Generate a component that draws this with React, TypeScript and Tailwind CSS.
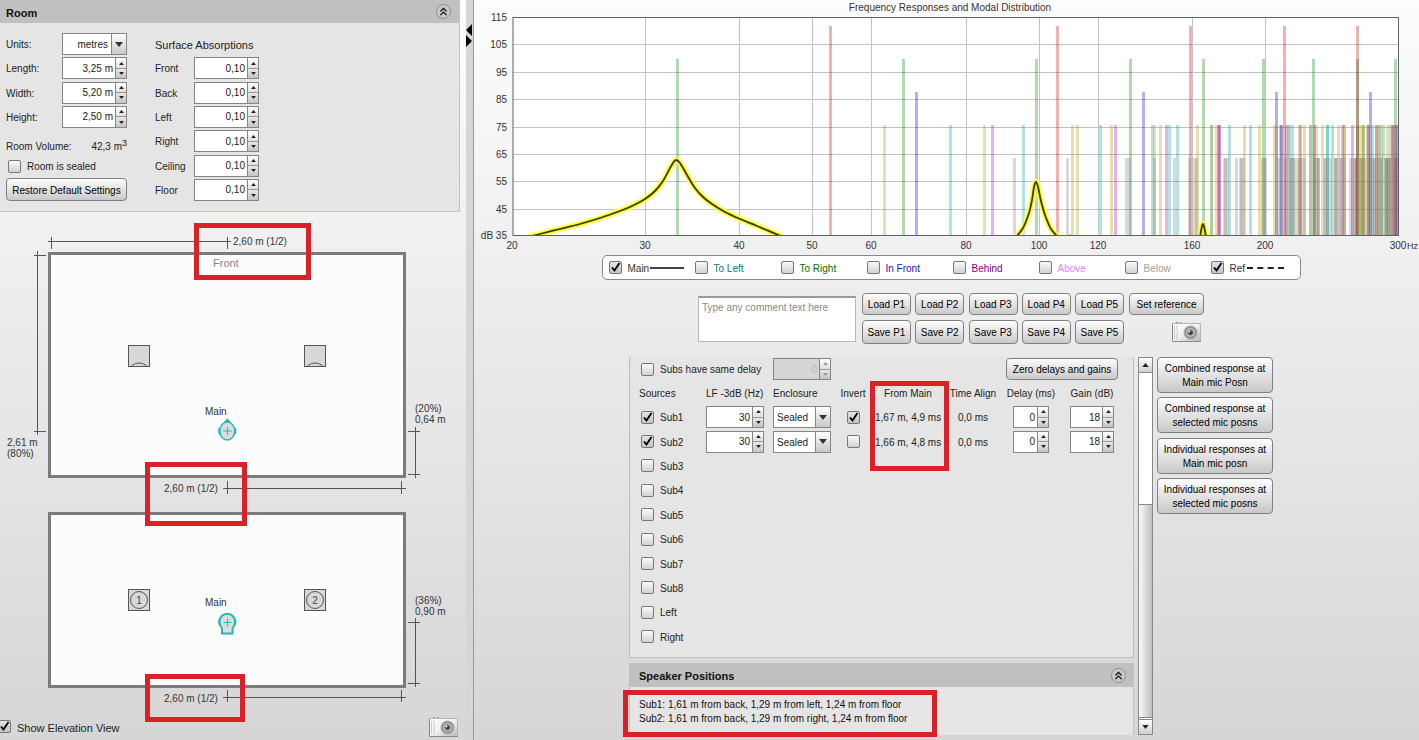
import { useState } from 'react';
import type { ReactNode } from 'react';
import { ChevronsUp } from 'lucide-react';

const SPEED_OF_SOUND = 344;
const ROOM = { length: 3.25, width: 5.2, height: 2.5 };

const PLOT = { left: 513, right: 1399, top: 17, bottom: 236 };
const F_MIN = 20;
const F_MAX = 300;

const freqToX = (f: number) =>
  PLOT.left + (Math.log(f / F_MIN) / Math.log(F_MAX / F_MIN)) * (PLOT.right - PLOT.left);
const dbToY = (db: number) => PLOT.bottom - ((db - 35) / 80) * (PLOT.bottom - PLOT.top);

interface Mode {
  freq: number;
  level: number;
  color: string;
}

// All axial, tangential and oblique modes that fall inside the plotted range
function roomModes(): Mode[] {
  const modes: Mode[] = [];
  for (let l = 0; l < 8; l++) {
    for (let w = 0; w < 12; w++) {
      for (let h = 0; h < 6; h++) {
        const freq =
          (SPEED_OF_SOUND / 2) * Math.hypot(l / ROOM.length, w / ROOM.width, h / ROOM.height);
        if (freq < F_MIN || freq > F_MAX) continue;
        if (l && w && h) modes.push({ freq, level: 63.5, color: '#808080' });
        else if (l && w) modes.push({ freq, level: 75.5, color: '#b49100' });
        else if (w && h) modes.push({ freq, level: 75.5, color: '#00a8a0' });
        else if (l && h) modes.push({ freq, level: 75.5, color: '#b000b0' });
        else if (l) modes.push({ freq, level: 111.7, color: '#c80000' });
        else if (w) modes.push({ freq, level: 99.7, color: '#008000' });
        else modes.push({ freq, level: 87.7, color: '#0000b8' });
      }
    }
  }
  return modes;
}

const MODES = roomModes();

type Point = [number, number];

const MAIN_PEAKS: Point[][] = [
  [
    [529, 237], [540, 234], [560, 229], [580, 224], [600, 218], [620, 211], [632, 206], [645, 199],
    [655, 191], [663, 181], [669, 170], [673, 163], [676, 160], [680, 163], [687, 175], [695, 188],
    [703, 197], [712, 204], [725, 212], [740, 219], [757, 226], [783, 237],
  ],
  [
    [1016, 237], [1023, 228], [1029, 213], [1032, 200], [1034, 187], [1036, 182], [1038, 187],
    [1041, 201], [1045, 215], [1051, 229], [1058, 237],
  ],
  [
    [1200, 237], [1202, 226], [1203, 224], [1204, 226], [1206, 237],
  ],
];

function smoothPath(points: Point[]) {
  let d = `M${points[0][0]} ${points[0][1]}`;
  for (let i = 0; i < points.length - 1; i++) {
    const p0 = points[Math.max(i - 1, 0)];
    const p1 = points[i];
    const p2 = points[i + 1];
    const p3 = points[Math.min(i + 2, points.length - 1)];
    d += ` C${p1[0] + (p2[0] - p0[0]) / 6} ${p1[1] + (p2[1] - p0[1]) / 6} ${p2[0] - (p3[0] - p1[0]) / 6} ${p2[1] - (p3[1] - p1[1]) / 6} ${p2[0]} ${p2[1]}`;
  }
  return d;
}

function Checkbox({ label, checked = false, labelClass = 'text-[#222]', hideLabel = false, children }: {
  label: string;
  checked?: boolean;
  labelClass?: string;
  hideLabel?: boolean;
  children?: ReactNode;
}) {
  const [on, setOn] = useState(checked);
  return (
    <label className="inline-flex items-center whitespace-nowrap">
      <span className="relative block h-[13px] w-[13px]">
        <input
          type="checkbox"
          checked={on}
          onChange={(e) => setOn(e.target.checked)}
          aria-label={hideLabel ? label : undefined}
          className="peer block h-[13px] w-[13px] appearance-none rounded-[2px] border border-[#777] bg-linear-to-b from-[#fafafa] to-[#d2d2d2] checked:from-[#e4e4e4] checked:to-[#c4c4c4]"
        />
        <svg viewBox="0 0 13 13" className="pointer-events-none absolute inset-0 hidden peer-checked:block">
          <path d="M3 6.5 5.5 9.5 10.5 2" fill="none" stroke="#000" strokeWidth="1.9" />
        </svg>
      </span>
      {!hideLabel && <span className={`ml-[6px] pt-[2px] ${labelClass}`}>{label}</span>}
      {children}
    </label>
  );
}

function Triangle({ up = false, className }: { up?: boolean; className: string }) {
  return (
    <svg viewBox="0 0 8 5" className={className}>
      <path d={up ? 'M0 5 4 0 8 5z' : 'M0 0h8L4 5z'} fill="currentColor" />
    </svg>
  );
}

function Spinner({ label, value, width, disabled = false }: {
  label: string;
  value: string;
  width: string;
  disabled?: boolean;
}) {
  const tone = disabled ? 'text-[#999]' : 'text-[#222]';
  return (
    <div className={`flex h-[22px] border border-[#858585] ${width} ${disabled ? 'bg-[#d6d6d6]' : 'bg-white'}`}>
      <input
        type="text"
        aria-label={label}
        defaultValue={value}
        disabled={disabled}
        className={`min-w-0 flex-1 bg-transparent pt-px pr-[2px] text-right text-[10px] outline-none ${disabled ? 'text-[#b5b5b5]' : ''}`}
      />
      <div className={`flex w-[11px] flex-col border-l border-[#858585] ${tone}`}>
        <button
          type="button"
          aria-label={`Increase ${label}`}
          disabled={disabled}
          className="flex flex-1 items-center justify-center border-b border-[#999] bg-linear-to-b from-white to-[#e0e0e0]"
        >
          <Triangle up className="h-[3px] w-[5px]" />
        </button>
        <button
          type="button"
          aria-label={`Decrease ${label}`}
          disabled={disabled}
          className="flex flex-1 items-center justify-center bg-linear-to-b from-[#e8e8e8] to-[#c4c4c4]"
        >
          <Triangle className="h-[3px] w-[5px]" />
        </button>
      </div>
    </div>
  );
}

function Dropdown({ label, options, width, align = '' }: {
  label: string;
  options: string[];
  width: string;
  align?: string;
}) {
  return (
    <div className={`relative h-[22px] ${width}`}>
      <select
        aria-label={label}
        className={`h-full w-full appearance-none border border-[#858585] bg-white pt-[2px] pr-[18px] pl-[3px] text-[10px] outline-none ${align}`}
      >
        {options.map((o) => (
          <option key={o}>{o}</option>
        ))}
      </select>
      <span className="pointer-events-none absolute inset-y-px right-px flex w-[15px] items-center justify-center border-l border-[#858585] bg-linear-to-b from-white to-[#c8c8c8] text-[#333]">
        <Triangle className="h-[5px] w-[8px]" />
      </span>
    </div>
  );
}

function Button({ className = '', children }: { className?: string; children: ReactNode }) {
  return (
    <button
      type="button"
      className={`flex items-center justify-center rounded-[4px] border border-[#808080] bg-linear-to-b from-[#fdfdfd] to-[#c9c9c9] pt-[2px] text-center text-[10px] leading-[14px] whitespace-nowrap text-black hover:to-[#d8d8d8] ${className}`}
    >
      {children}
    </button>
  );
}

function CameraButton({ label }: { label: string }) {
  return (
    <button type="button" aria-label={label} className="block h-[21px] w-[29px]">
      <svg viewBox="0 0 29 21" className="h-full w-full">
        <defs>
          <linearGradient id="cameraBody" x1="0" y1="0" x2="1" y2="1">
            <stop offset="0" stopColor="#fff" />
            <stop offset="0.5" stopColor="#f0f0f0" />
            <stop offset="1" stopColor="#b8b8b8" />
          </linearGradient>
          <radialGradient id="cameraLens">
            <stop offset="0" stopColor="#222" />
            <stop offset="0.3" stopColor="#555" />
            <stop offset="0.55" stopColor="#c8c8c8" />
            <stop offset="0.8" stopColor="#8c8c8c" />
            <stop offset="1" stopColor="#b8b8b8" />
          </radialGradient>
        </defs>
        <path d="M4 1.5h2M8 1.5h1.5" stroke="#999" />
        <rect x="0.5" y="2.5" width="28" height="18" fill="url(#cameraBody)" stroke="#b4b4b4" />
        <path d="M0.5 20V3M1 20.5h28" stroke="#8a8a8a" />
        <path d="M4.5 4q2 7 0 15M2.5 5v13" fill="none" stroke="#ccc" />
        <circle cx="18.5" cy="11.5" r="6.5" fill="url(#cameraLens)" stroke="#a0a0a0" />
        <circle cx="17.5" cy="10.5" r="1" fill="#fff" />
      </svg>
    </button>
  );
}

function CollapseHeader({ title, className = '' }: { title: string; className?: string }) {
  return (
    <div className={`flex items-center justify-between bg-[#c0c0c0] ${className}`}>
      <h2 className="pt-[2px] text-[11px] font-bold text-[#111]">{title}</h2>
      <button
        type="button"
        aria-label={`Collapse ${title}`}
        className="flex h-[15px] w-[15px] items-center justify-center rounded-full border border-[#8c8c8c] bg-[#cacaca]"
      >
        <ChevronsUp className="h-[13px] w-[13px] text-[#222]" strokeWidth={2.5} />
      </button>
    </div>
  );
}

const DIMENSIONS = [
  { label: 'Length:', value: '3,25 m' },
  { label: 'Width:', value: '5,20 m' },
  { label: 'Height:', value: '2,50 m' },
];

const SURFACES = ['Front', 'Back', 'Left', 'Right', 'Ceiling', 'Floor'];

function RoomPanel() {
  return (
    <section className="mr-[6px] border-r border-b border-[#c4c4c4] bg-[#e5e5e5]">
      <CollapseHeader title="Room" className="h-[23px] pr-[8px] pl-[6px]" />
      <div className="flex gap-[28px] px-[6px] pt-[10px] pb-[10px]">
        <div className="flex h-[168px] w-[121px] flex-col">
          <div className="flex h-[95px] flex-col justify-between">
            <div className="flex items-center justify-between">
              <span className="pt-[2px]">Units:</span>
              <Dropdown label="Units" options={['metres', 'feet']} width="w-[65px]" align="text-right" />
            </div>
            {DIMENSIONS.map((d) => (
              <div key={d.label} className="flex items-center justify-between">
                <span className="pt-[2px]">{d.label}</span>
                <Spinner label={d.label} value={d.value} width="w-[65px]" />
              </div>
            ))}
          </div>
          <div className="mt-[10px] flex h-[16px] items-center justify-between">
            <span className="pt-[2px]">Room Volume:</span>
            <span className="pt-[2px]">
              42,3 m<sup className="text-[9px]">3</sup>
            </span>
          </div>
          <div className="mt-[5px] mb-auto flex h-[14px] items-center pl-[2px]">
            <Checkbox label="Room is sealed" />
          </div>
          <Button className="h-[23px] w-full">Restore Default Settings</Button>
        </div>
        <div className="flex h-[168px] w-[104px] flex-col justify-between">
          <div className="flex h-[22px] items-center pt-[2px] text-[11px] whitespace-nowrap">Surface Absorptions</div>
          {SURFACES.map((s) => (
            <div key={s} className="flex items-center justify-between">
              <span className="pt-[2px]">{s}</span>
              <Spinner label={`${s} absorption`} value="0,10" width="w-[65px]" />
            </div>
          ))}
        </div>
      </div>
    </section>
  );
}

function RoomViews() {
  return (
    <svg viewBox="0 213 466 502" className="block w-full overflow-visible text-[10px]" fill="#333">
      <g stroke="#555" strokeWidth="1" fill="none">
        <path d="M48 242.5H231M51.5 238V250M227.5 238V250" />
        <path d="M37.5 252V436M34 256.5H46M34 432.5H46" />
        <path d="M415.5 428V479M408 432.5H420M408 475.5H420" />
        <path d="M223 489.5H406M227.5 482V495M401.5 482V495" />
        <path d="M415.5 619V688M408 623.5H420M408 684.5H420" />
        <path d="M223 698.5H406M227.5 691V703M401.5 691V703" />
      </g>

      <g fill="#fcfcfc" stroke="#7b7b7b" strokeWidth="3">
        <rect x="49.5" y="254.5" width="355" height="223" />
        <rect x="49.5" y="514.5" width="355" height="173" />
      </g>

      <text x="233" y="246">2,60 m (1/2)</text>
      <text x="213" y="268" className="text-[11px]" fill="#888">Front</text>
      <text x="205" y="416">Main</text>
      <text x="415" y="413">(20%)</text>
      <text x="415" y="424">0,64 m</text>
      <text x="7" y="447">2,61 m</text>
      <text x="7" y="458">(80%)</text>
      <text x="164" y="493">2,60 m (1/2)</text>
      <text x="205" y="607">Main</text>
      <text x="415" y="605">(36%)</text>
      <text x="415" y="616">0,90 m</text>
      <text x="164" y="703">2,60 m (1/2)</text>

      {[128.5, 304.5].map((x, i) => (
        <g key={x} fill="#d8d8d8" stroke="#555">
          <rect x={x} y="346.5" width="21" height="21" />
          <path d={`M${x + 3} 366.5q7.5 -5 15 0`} />
          <rect x={x} y="590.5" width="21" height="21" />
          <circle cx={x + 10.5} cy="601" r="8.5" />
          <text x={x + 10.5} y="605" textAnchor="middle" fill="#444" stroke="none">
            {i + 1}
          </text>
        </g>
      ))}

      <g fill="#d6dede" stroke="#2cb4b4" strokeWidth="1.5">
        <path d="M219 430v4l1.5 1v-6zM235.5 430v4l-1.5 1v-6z" fill="#2cb4b4" />
        <path d="M227.3 420.5 229.5 423h-4.4z" fill="#2cb4b4" />
        <ellipse cx="227.3" cy="432" rx="7.5" ry="9" />
        <path d="M223.5 432h8M227.5 428v8" strokeWidth="1" />
        <path d="M219 621v4l2 2v-8zM235.5 621v4l-2 2v-8z" fill="#2cb4b4" />
        <path d="M222 634.5v-5q-2.5-3.5-2.5-7a7.8 7.800 0 0 1 15.600 0q0 3.5-2.5 7v5z" strokeWidth="2" />
        <path d="M223.5 623.5h8M227.5 619.5v8" strokeWidth="1" />
      </g>

      <g fill="none" stroke="#dc2028" strokeWidth="5">
        <rect x="196.5" y="226.5" width="112" height="52" />
        <rect x="147.5" y="465.5" width="97" height="59" />
        <rect x="147.5" y="677.5" width="95" height="43" />
      </g>
    </svg>
  );
}

const DB_TICKS = [115, 105, 95, 85, 75, 65, 55, 45];
const FREQ_TICKS = [20, 30, 40, 50, 60, 80, 100, 120, 160, 200, 300];

function ResponseChart() {
  return (
    <svg viewBox="474 0 945 252" className="block w-full text-[10px]" fill="#333">
      <defs>
        <clipPath id="plotArea">
          <rect x={PLOT.left} y={PLOT.top} width={PLOT.right - PLOT.left} height={PLOT.bottom - PLOT.top} />
        </clipPath>
      </defs>
      <text x="950" y="11" textAnchor="middle">
        Frequency Responses and Modal Distribution
      </text>
      <rect x="513" y="17" width="886" height="219" fill="#fff" />
      <g stroke="#c2c2c2">
        {DB_TICKS.slice(1).map((db) => (
          <line key={db} x1={PLOT.left} x2={PLOT.right} y1={Math.round(dbToY(db)) + 0.5} y2={Math.round(dbToY(db)) + 0.5} />
        ))}
        {FREQ_TICKS.slice(1, -1).map((f) => (
          <line key={f} y1={PLOT.top} y2={PLOT.bottom} x1={Math.round(freqToX(f)) - 0.5} x2={Math.round(freqToX(f)) - 0.5} />
        ))}
      </g>
      <g clipPath="url(#plotArea)">
        {MODES.map((m, i) => {
          const y = Math.round(dbToY(m.level));
          return (
            <rect
              key={i}
              x={Math.round(freqToX(m.freq)) - 2}
              y={y}
              width={3}
              height={PLOT.bottom - y}
              fill={m.color}
              fillOpacity={0.3}
            />
          );
        })}
        <g fill="none" strokeLinejoin="round">
          {MAIN_PEAKS.map((p, i) => (
            <path key={i} d={smoothPath(p)} stroke="#ffff50" strokeOpacity="0.6" strokeWidth="7" />
          ))}
          {MAIN_PEAKS.map((p, i) => (
            <path key={i} d={smoothPath(p)} stroke="#f4f400" strokeOpacity="0.7" strokeWidth="4" />
          ))}
          {MAIN_PEAKS.map((p, i) => (
            <path key={i} d={smoothPath(p)} stroke="#3c3c0c" strokeWidth="1.8" />
          ))}
          <circle cx="1070" cy="236" r="2" fill="#d8d820" />
        </g>
      </g>
      <rect x="513" y="17.5" width="885.5" height="218" fill="none" stroke="#606060" />
      {DB_TICKS.map((db) => (
        <text key={db} x="507" y={Math.round(dbToY(db)) + 4} textAnchor="end">
          {db}
        </text>
      ))}
      <text x="507" y="239" textAnchor="end">
        dB 35
      </text>
      {FREQ_TICKS.map((f) => (
        <text key={f} x={Math.round(freqToX(f)) - 1} y="249" textAnchor="middle">
          {f}
        </text>
      ))}
      <text x="1418" y="249" textAnchor="end" className="text-[9px]">
        Hz
      </text>
    </svg>
  );
}

const TRACES = [
  { label: 'Main', color: 'text-[#333]', checked: true },
  { label: 'To Left', color: 'text-[#008080]' },
  { label: 'To Right', color: 'text-[#007000]' },
  { label: 'In Front', color: 'text-[#1414b4]' },
  { label: 'Behind', color: 'text-[#800080]' },
  { label: 'Above', color: 'text-[#ee82ee]' },
  { label: 'Below', color: 'text-[#a0a0a0]' },
  { label: 'Ref', color: 'text-[#333]', checked: true },
];

function Legend() {
  return (
    <div className="mt-[3px] flex h-[25px] w-[699px] items-center rounded-[5px] border border-[#888] bg-white pl-[6px]">
      {TRACES.map((t) => (
        <div key={t.label} className="flex w-[86px] items-center">
          <Checkbox label={t.label} checked={t.checked} labelClass={t.color}>
            {t.label === 'Main' && <span className="ml-px w-[34px] border-t-2 border-[#444]" />}
            {t.label === 'Ref' && <span className="ml-[2px] w-[37px] border-t-2 border-dashed border-[#222]" />}
          </Checkbox>
        </div>
      ))}
    </div>
  );
}

const PRESETS = ['P1', 'P2', 'P3', 'P4', 'P5'];

function Presets() {
  return (
    <div className="mt-[13px] flex items-start gap-[6px]">
      <textarea
        aria-label="Comment"
        placeholder="Type any comment text here"
        className="mt-[3px] block h-[46px] w-[158px] resize-none border border-t-2 border-[#b8b8b8] border-t-[#999] bg-white px-[3px] py-[3px] text-[10px] leading-[14px] outline-none placeholder:text-[#8a8a8a]"
      />
      <div className="flex gap-[5px]">
        <div className="flex w-[262px] flex-col gap-[5px]">
          <div className="flex justify-between">
            {PRESETS.map((p) => (
              <Button key={p} className="h-[22px] w-[49px]">Load {p}</Button>
            ))}
          </div>
          <div className="flex justify-between">
            {PRESETS.map((p) => (
              <Button key={p} className="h-[24px] w-[49px]">Save {p}</Button>
            ))}
          </div>
        </div>
        <div className="flex flex-col items-center gap-[6px]">
          <Button className="h-[22px] w-[75px]">Set reference</Button>
          <div className="pl-[40px]">
            <CameraButton label="Capture graph" />
          </div>
        </div>
      </div>
    </div>
  );
}

const SOURCES = [
  { name: 'Sub1', on: true, lf: '30', invert: true, fromMain: '1,67 m, 4,9 ms', align: '0,0 ms', delay: '0', gain: '18' },
  { name: 'Sub2', on: true, lf: '30', invert: false, fromMain: '1,66 m, 4,8 ms', align: '0,0 ms', delay: '0', gain: '18' },
];

const UNUSED_SOURCES = ['Sub3', 'Sub4', 'Sub5', 'Sub6', 'Sub7', 'Sub8', 'Left', 'Right'];

function SourcesPanel() {
  return (
    <section className="relative border-x border-b border-[#bcbcbc] bg-[#e5e5e5] pb-[8px] pl-[9px]">
      <div className="flex h-[24px] pt-px">
        <div className="flex h-[22px] w-[134px] items-center pl-[2px]">
          <Checkbox label="Subs have same delay" />
        </div>
        <Spinner label="Shared delay" value="0" width="w-[58px]" disabled />
        <Button className="mr-[15px] ml-auto h-[22px] w-[112px]">Zero delays and gains</Button>
      </div>
      <table className="h-[268px] w-[488px] table-fixed border-collapse text-center whitespace-nowrap">
        <colgroup>
          <col className="w-[67px]" />
          <col className="w-[67px]" />
          <col className="w-[58px]" />
          <col className="w-[44px]" />
          <col className="w-[66px]" />
          <col className="w-[64px]" />
          <col className="w-[52px]" />
          <col className="w-[70px]" />
        </colgroup>
        <thead>
          <tr className="h-[24px]">
            <th className="p-0 pt-[2px] text-left font-normal">Sources</th>
            <th className="p-0 pt-[2px] text-left font-normal">LF -3dB (Hz)</th>
            <th className="p-0 pt-[2px] text-left font-normal">Enclosure</th>
            <th className="p-0 pt-[2px] font-normal">Invert</th>
            <th className="p-0 pt-[2px] font-normal">From Main</th>
            <th className="p-0 pt-[2px] font-normal">Time Align</th>
            <th className="p-0 pt-[2px] font-normal">Delay (ms)</th>
            <th className="p-0 pt-[2px] font-normal">Gain (dB)</th>
          </tr>
        </thead>
        <tbody>
          {SOURCES.map((s) => (
            <tr key={s.name} className="h-[24px]">
              <td className="p-0 pl-[2px] text-left">
                <div className="flex items-center">
                  <Checkbox label={s.name} checked={s.on} />
                </div>
              </td>
              <td className="p-0">
                <Spinner label={`${s.name} LF -3dB`} value={s.lf} width="w-[58px]" />
              </td>
              <td className="p-0">
                <Dropdown label={`${s.name} enclosure`} options={['Sealed', 'Ported']} width="w-[58px]" />
              </td>
              <td className="p-0">
                <div className="flex justify-center">
                  <Checkbox label={`Invert ${s.name}`} checked={s.invert} hideLabel />
                </div>
              </td>
              <td className="p-0 pt-[2px]">{s.fromMain}</td>
              <td className="p-0 pt-[2px]">{s.align}</td>
              <td className="p-0">
                <div className="flex justify-center">
                  <Spinner label={`${s.name} delay`} value={s.delay} width="w-[36px]" />
                </div>
              </td>
              <td className="p-0">
                <div className="flex justify-center">
                  <Spinner label={`${s.name} gain`} value={s.gain} width="w-[44px]" />
                </div>
              </td>
            </tr>
          ))}
          {UNUSED_SOURCES.map((name) => (
            <tr key={name} className="h-[24px]">
              <td className="p-0 pl-[2px] text-left" colSpan={8}>
                <div className="flex items-center">
                  <Checkbox label={name} />
                </div>
              </td>
            </tr>
          ))}
        </tbody>
      </table>
      <div className="pointer-events-none absolute top-[24px] left-[240px] h-[90px] w-[79px] border-5 border-[#dc2028]" />
    </section>
  );
}

function SpeakerPositions() {
  return (
    <section className="relative mt-[5px]">
      <CollapseHeader title="Speaker Positions" className="h-[24px] pr-[8px] pl-[10px]" />
      <div className="h-[48px] border-x border-[#c4c4c4] bg-[#e5e5e5] pt-[11px] pl-[9px] leading-[14px] text-[#111]">
        <p>Sub1: 1,61 m from back, 1,29 m from left, 1,24 m from floor</p>
        <p>Sub2: 1,61 m from back, 1,29 m from right, 1,24 m from floor</p>
      </div>
      <div className="pointer-events-none absolute top-[27px] left-[-6px] h-[47px] w-[314px] border-5 border-[#dc2028]" />
    </section>
  );
}

function ScrollBar() {
  return (
    <div className="flex w-[15px] flex-col border border-[#888] bg-white">
      <button
        type="button"
        aria-label="Scroll up"
        className="flex h-[15px] items-center justify-center border-b border-[#888] bg-linear-to-b from-white to-[#cfcfcf]"
      >
        <Triangle up className="h-[4px] w-[7px]" />
      </button>
      <div className="h-[131px]" />
      <div className="flex-1 border-y border-[#888] bg-linear-to-r from-[#fafafa] to-[#c0c0c0]" />
      <button
        type="button"
        aria-label="Scroll down"
        className="mt-px flex h-[15px] items-center justify-center border-t border-[#888] bg-linear-to-b from-white to-[#cfcfcf]"
      >
        <Triangle className="h-[4px] w-[7px]" />
      </button>
    </div>
  );
}

const RESPONSE_ACTIONS = [
  ['Combined response at', 'Main mic Posn'],
  ['Combined response at', 'selected mic posns'],
  ['Individual responses at', 'Main mic posn'],
  ['Individual responses at', 'selected mic posns'],
];

export default function App() {
  return (
    <div className="flex min-h-screen overflow-hidden bg-linear-to-b from-[#fdfdfd] to-[#d6d6d6] font-['Liberation_Sans',Arial,sans-serif] text-[10px] leading-[14px] text-[#222]">
      <aside className="flex w-[466px] shrink-0 flex-col">
        <RoomPanel />
        <RoomViews />
        <div className="flex h-[25px] items-center justify-between pr-[8px]">
          <div className="-ml-[2px] flex items-center text-[11px]">
            <Checkbox label="Show Elevation View" checked />
          </div>
          <CameraButton label="Capture room view" />
        </div>
      </aside>

      <div className="w-[8px] shrink-0 border-r border-[#999] bg-[#d6d6d6] pt-[24px]">
        <svg viewBox="0 0 7 23" className="block h-[23px] w-[7px]">
          <path d="M6 0v12L0 6zM0 11v12l6-6z" fill="#000" />
        </svg>
      </div>

      <main className="min-w-0 flex-1">
        <ResponseChart />
        <div className="flex flex-col items-center pl-[9px]">
          <Legend />
          <Presets />
          <div className="mt-[13px] flex items-start">
            <div className="w-[505px]">
              <SourcesPanel />
              <SpeakerPositions />
            </div>
            <div className="ml-[4px] flex self-stretch">
              <ScrollBar />
            </div>
            <div className="ml-[4px] flex h-[157px] w-[116px] flex-col justify-between">
              {RESPONSE_ACTIONS.map(([first, second]) => (
                <Button key={first + second} className="h-[36px] w-full">
                  {first}
                  <br />
                  {second}
                </Button>
              ))}
            </div>
          </div>
        </div>
      </main>
    </div>
  );
}
